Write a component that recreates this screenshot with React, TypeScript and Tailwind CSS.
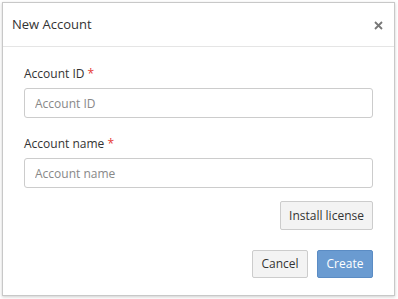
import React from "react";

export default function App() {
  return (
    <div className="w-[398px] h-[299px] bg-white pt-[2px] pl-[2px]" style={{ fontFamily: '"Open Sans", sans-serif' }}>
      <div className="w-[393px] h-[294px] bg-white border border-[#c8c8c8] shadow-[0_1px_3px_rgba(0,0,0,0.2)] flex flex-col">
        <div className="h-[44px] flex items-center justify-between pl-[9px] pr-[11px] border-b border-[#e5e5e5]">
          <span className="text-[13px] text-[#333]">New Account</span>
          <svg width="9" height="9" viewBox="0 0 9 9" className="mt-[1px]">
            <path d="M1 1L8 8M8 1L1 8" stroke="#777" strokeWidth="1.8" strokeLinecap="butt" />
          </svg>
        </div>
        <div className="flex flex-col px-[21px] pt-[18px]">
          <label className="text-[12px] text-[#333] leading-[18px]">
            Account ID <span className="text-[#e53935]">*</span>
          </label>
          <input
            placeholder="Account ID"
            className="mt-[5px] h-[30px] w-[349px] rounded-[3px] border border-[#ccc] px-[10px] text-[12px] text-[#333] placeholder:text-[#888] outline-none"
          />
          <label className="mt-[17px] text-[12px] text-[#333] leading-[18px]">
            Account name <span className="text-[#e53935]">*</span>
          </label>
          <input
            placeholder="Account name"
            className="mt-[5px] h-[30px] w-[349px] rounded-[3px] border border-[#ccc] px-[10px] text-[12px] text-[#333] placeholder:text-[#888] outline-none"
          />
          <div className="flex justify-end mt-[13px] w-[349px]">
            <button className="h-[29px] w-[93px] rounded-[2px] border border-[#ccc] bg-[#f3f3f3] text-[12px] text-[#333]">
              Install license
            </button>
          </div>
          <div className="flex justify-end gap-[9px] mt-[20px] w-[349px]">
            <button className="h-[28px] w-[56px] rounded-[2px] border border-[#ccc] bg-[#f3f3f3] text-[12px] text-[#333]">
              Cancel
            </button>
            <button className="h-[28px] w-[56px] rounded-[2px] border border-[#5b8cc4] bg-[#6a9bd1] text-[12px] text-white">
              Create
            </button>
          </div>
        </div>
      </div>
    </div>
  );
}
